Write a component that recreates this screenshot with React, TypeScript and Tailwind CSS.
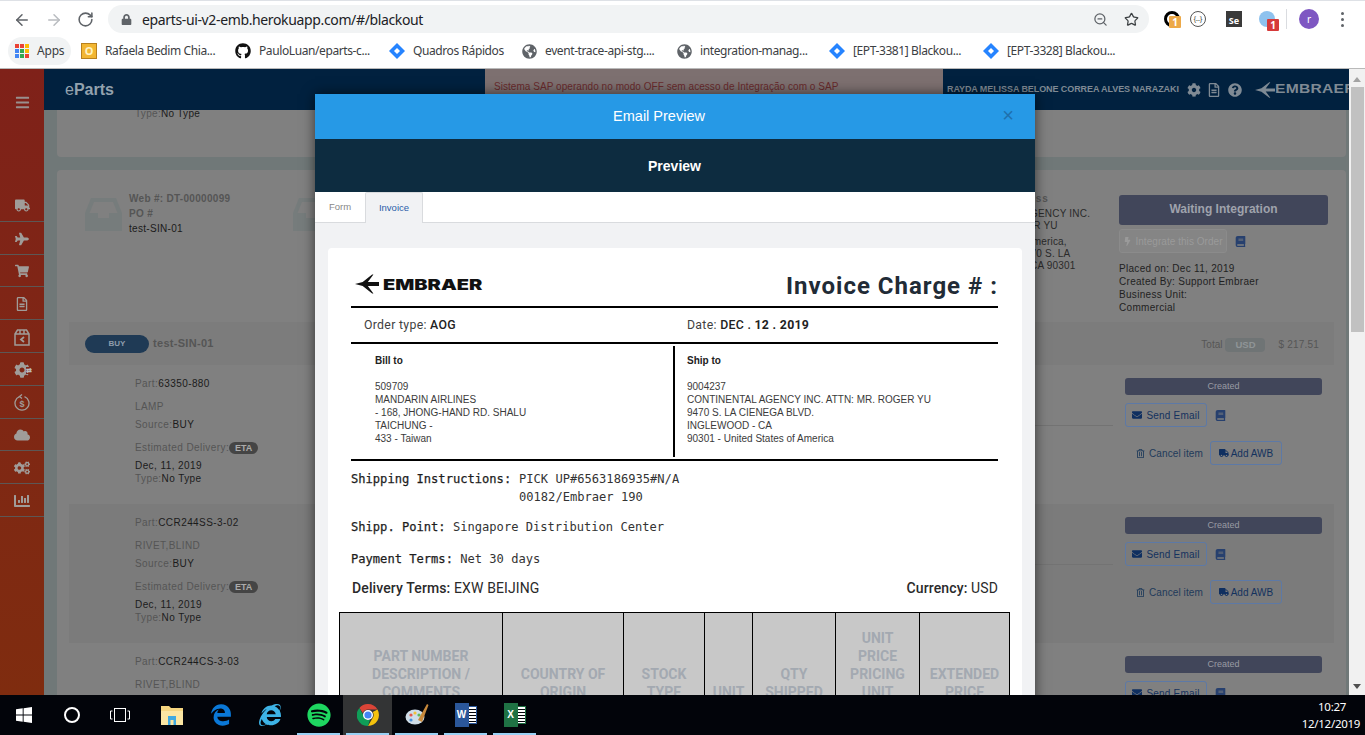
import React from "react";
import { ArrowLeft, ArrowRight, RotateCw, ZoomOut, Star } from "lucide-react";
import {
  FaLock, FaGithub, FaGlobeAmericas, FaBars, FaTruck, FaPlane, FaShoppingCart, FaRegFileAlt, FaCog, FaCloud,
  FaCogs, FaChartBar, FaBook, FaEnvelope, FaBolt, FaRegTrashAlt, FaQuestionCircle, FaSpotify, FaEdgeLegacy, FaInternetExplorer,
} from "react-icons/fa";

const Diamond = () => (
  <svg width="16" height="16" viewBox="0 0 16 16">
    <path d="M8 0 16 8 8 16 0 8Z" fill="#2684ff" />
    <path d="M8 5 11 8 8 11 5 8Z" fill="#fff" />
  </svg>
);

const Mark = ({ color, w = 28, h = 22 }: { color: string; w?: number; h?: number }) => (
  <svg width={w} height={h} viewBox="0 0 28 22" fill={color}>
    <path d="M0 11 9 8.6 20 0 21.5 0 15 8.8 28 8.8 28 13.2 15 13.2 21.5 22 20 22 9 13.4Z" />
  </svg>
);

const Tray = () => (
  <svg width="37" height="33" viewBox="0 0 37 33" className="shrink-0">
    <path fillRule="evenodd" d="M6 0H31L37 15V33H0V15ZM9 4 4.5 15H13V20H24V15H32.5L28 4Z" fill="#767c7c" />
  </svg>
);

const Bookmark = ({ icon, label, w }: { icon: React.ReactNode; label: string; w: string }) => (
  <div className={`flex items-center gap-2 shrink-0 ${w}`}>
    <span className="w-4 h-4 flex items-center justify-center shrink-0">{icon}</span>
    <span className="text-[12px] tracking-[-0.4px] text-[#3c4043] whitespace-nowrap">{label}</span>
  </div>
);

const Badge = ({ color, children }: { color: string; children: React.ReactNode }) => (
  <span className={`absolute -right-1 -bottom-1 w-3 h-3 rounded-[1px] text-[10px] leading-3 text-center font-bold text-white ${color}`}>{children}</span>
);

function BrowserChrome() {
  return (
    <div className="shrink-0 bg-white" style={{ fontFamily: '"Noto Sans", sans-serif' }}>
      <div className="h-[1px] bg-[#dee1e6]" />
      <div className="h-[37px] flex items-center">
        <div className="w-[108px] pl-[13px] flex items-center gap-[14px] text-[#5f6368]">
          <ArrowLeft size={18} strokeWidth={2} />
          <ArrowRight size={18} strokeWidth={2} className="text-[#b9bcc0]" />
          <RotateCw size={17} strokeWidth={2.2} />
        </div>
        <div className="w-[1041px] h-7 -mt-[1px] rounded-[14px] bg-[#f1f3f4] flex items-center pl-[13px] pr-[10px]">
          <FaLock size={11} className="text-[#5f6368]" />
          <span className="ml-[10px] text-[14px] tracking-[-0.36px] text-[#202124] flex-1 whitespace-nowrap">eparts-ui-v2-emb.herokuapp.com/#/blackout</span>
          <ZoomOut size={15} className="text-[#5f6368] mr-[16px]" />
          <Star size={15} className="text-[#3c4043]" />
        </div>
        <div className="flex items-center ml-[15px] -mt-[1px]">
          <span className="relative w-4 h-4 rounded-full border-[3px] border-black"><Badge color="bg-[#eda948]">1</Badge></span>
          <span className="ml-[10px] w-4 h-4 rounded-full border border-[#555] text-[7px] leading-[14px] text-center text-[#333]">{"{..}"}</span>
          <span className="ml-[20px] w-4 h-4 bg-[#3a3a3a] text-white text-[9px] leading-[16px] pt-[2px] text-center font-bold">Se</span>
          <span className="relative ml-[17px] w-4 h-4 rounded-full bg-[#8ec2ee]"><Badge color="bg-[#d63a3a]">1</Badge></span>
          <span className="ml-[11px] w-[1px] h-5 bg-[#dadce0]" />
          <span className="ml-[12px] w-5 h-5 rounded-full bg-[#7e57c2] text-white text-[10px] leading-5 text-center">r</span>
          <span className="ml-[22px] flex flex-col gap-[3px]">
            <i className="w-[3px] h-[3px] rounded-full bg-[#5f6368]" />
            <i className="w-[3px] h-[3px] rounded-full bg-[#5f6368]" />
            <i className="w-[3px] h-[3px] rounded-full bg-[#5f6368]" />
          </span>
        </div>
      </div>
      <div className="h-[31px] flex items-center border-b border-[#b9b9b9] pl-[8px]">
        <div className="w-[63px] h-[28px] rounded-[14px] bg-[#f1f3f4] flex items-center pl-[7px] gap-[8px] shrink-0 -mt-[4px]">
          <span className="grid grid-cols-3 gap-[1.5px] w-[14px]">
            {["#ea4335","#ea4335","#fbbc04","#4285f4","#34a853","#fbbc04","#4285f4","#34a853","#ea4335"].map((c, i) => (
              <i key={i} className="w-[3.5px] h-[3.5px]" style={{ background: c }} />
            ))}
          </span>
          <span className="text-[12px] tracking-[-0.2px] text-[#3c4043]">Apps</span>
        </div>
        <div className="flex items-center ml-[10px] -mt-[4px]">
          <Bookmark w="w-[154px]" label="Rafaela Bedim Chia..." icon={<span className="w-4 h-4 bg-[#f2b632] border border-[#b8801c] text-[11px] font-bold leading-[14px] text-center text-[#fff3c4]">O</span>} />
          <Bookmark w="w-[154px]" label="PauloLuan/eparts-c..." icon={<FaGithub size={16} className="text-[#111]" />} />
          <Bookmark w="w-[132px]" label="Quadros Rápidos" icon={<Diamond />} />
          <Bookmark w="w-[155px]" label="event-trace-api-stg...." icon={<FaGlobeAmericas size={15} className="text-[#5f6368]" />} />
          <Bookmark w="w-[153px]" label="integration-manag..." icon={<FaGlobeAmericas size={15} className="text-[#5f6368]" />} />
          <Bookmark w="w-[154px]" label="[EPT-3381] Blackou..." icon={<Diamond />} />
          <Bookmark w="w-[140px]" label="[EPT-3328] Blackou..." icon={<Diamond />} />
        </div>
      </div>
    </div>
  );
}

const SideRow = ({ children }: { children: React.ReactNode }) => (
  <div className="h-[32.8px] pt-[2px] border-b border-[#5c5755] flex items-center justify-center text-[#a09c99]">{children}</div>
);

function Sidebar() {
  return (
    <div className="w-[44px] shrink-0 bg-gradient-to-b from-[#7f2119] to-[#7f2c0f]">
      <div className="h-[120px] pt-[26px] flex justify-center text-[#99908e]"><FaBars size={15} /></div>
      <SideRow><FaTruck size={15} /></SideRow>
      <SideRow><FaPlane size={14} /></SideRow>
      <SideRow><FaShoppingCart size={14} /></SideRow>
      <SideRow><FaRegFileAlt size={14} /></SideRow>
      <SideRow>
        <svg width="16" height="17" viewBox="0 0 16 17" fill="none" stroke="currentColor" strokeWidth="1.5">
          <path d="M1 5 3.5 1h9L15 5v11H1ZM1 5h14M6 1v4M10 1v4" />
          <path d="M10 8 7 10.5 10 13" strokeWidth="1.8" />
        </svg>
      </SideRow>
      <SideRow><span className="relative"><FaCog size={16} /><span className="absolute -right-[2px] top-[5px] text-[7px] font-bold leading-[7px] bg-[#7f2515] text-[#bbb]">⇄</span></span></SideRow>
      <SideRow>
        <svg width="16" height="17" viewBox="0 0 16 17" fill="none" stroke="currentColor" strokeWidth="1.3">
          <path d="M10.5 2.6A7 7 0 1 1 5.5 2.6" /><path d="M8 .5 5.5 2.6 8 4.6" />
          <text x="8" y="12.5" fontSize="9" fontWeight="700" fill="currentColor" stroke="none" textAnchor="middle" fontFamily="Liberation Sans">$</text>
        </svg>
      </SideRow>
      <SideRow><FaCloud size={16} /></SideRow>
      <SideRow><FaCogs size={16} /></SideRow>
      <SideRow><FaChartBar size={16} /></SideRow>
    </div>
  );
}

function TopHeader() {
  return (
    <div className="relative h-[41px] shrink-0 bg-[#01213f] flex items-center pl-[21px] pr-0" style={{ fontFamily: '"Liberation Sans", sans-serif' }}>
      <span className="text-[16px] font-bold text-[#93a2ae]"><span className="font-normal">e</span>Parts</span>
      <div className="absolute left-[441px] top-0 w-[458px] h-[41px] rounded-b-[3px] bg-[#7d7070] pl-[9px] pt-[11px] text-[10px] leading-[13px] tracking-[0.05px] text-[#682a2c]">
        Sistema SAP operando no modo OFF sem acesso de Integração com o SAP
      </div>
      <div className="ml-auto flex items-center overflow-hidden w-[402px] shrink-0 text-[#7f8a94]">
        <span className="text-[9px] font-bold whitespace-nowrap tracking-[-0.08px] w-[239px] shrink-0">RAYDA MELISSA BELONE CORREA ALVES NARAZAKI</span>
        <FaCog size={14} className="shrink-0 ml-[1px]" />
        <FaRegFileAlt size={14} className="shrink-0 ml-[6px]" />
        <FaQuestionCircle size={14} className="shrink-0 ml-[7px]" />
        <span className="shrink-0 ml-[13px]"><Mark color="#7f8a94" w={20} h={18} /></span>
        <span className="text-[12.5px] font-bold tracking-[0.2px] whitespace-nowrap scale-x-[1.25] origin-left">EMBRAER</span>
      </div>
    </div>
  );
}

const Lbl = ({ l, v }: { l: string; v: string }) => (
  <div className="text-[#555]">{l}<span className="text-[#1b1b1b]">{v}</span></div>
);

function PartRow({ part, desc, dark, line }: { part: string; desc: string; dark?: boolean; line?: boolean }) {
  return (
    <div className={`h-[139px] flex shrink-0 pl-[66px] pr-[12px] pt-[13px] ${dark ? "bg-[#7b7b7b]" : ""}`}>
      <div className="w-[300px] shrink-0 text-[10px] leading-[12px] tracking-[0.42px]">
        <Lbl l="Part:" v={part} />
        <div className="mt-[11px] text-[#555]">{desc}</div>
        <div className="mt-[6px]"><Lbl l="Source:" v="BUY" /></div>
        <div className="mt-[11px] flex items-center text-[#555]">Estimated Delivery:
          <span className="w-[29px] h-[12px] rounded-[6px] bg-[#454545] text-[#ababab] text-[9px] font-bold text-center leading-[12px] tracking-normal">ETA</span>
        </div>
        <div className="mt-[6px] text-[#1b1b1b]">Dec, 11, 2019</div>
        <div className="mt-[1px]"><Lbl l="Type:" v="No Type" /></div>
      </div>
      <div className="flex-1">{line && <div className="mt-[47px] h-[1px] bg-[#737373]" />}</div>
      <div className="w-[197px] ml-[12px] shrink-0">
        <div className="h-[17px] rounded-[3px] bg-[#41465a] text-[#999ba3] text-[9px] text-center leading-[17px]">Created</div>
        <div className="flex items-center mt-[8px]">
          <div className="w-[82px] h-[24px] rounded-[3px] border border-[#5d79a6] flex items-center justify-center gap-[4px] text-[10px] tracking-[0.2px] text-[#14325e]"><FaEnvelope size={10} className="text-[#0f2f60]" />Send Email</div>
          <FaBook size={11} className="ml-[8px] text-[#27406e]" />
        </div>
        <div className="flex items-center mt-[14px] pl-[11px]">
          <FaRegTrashAlt size={9} className="text-[#1e3a5a]" />
          <span className="ml-[4px] text-[10px] tracking-[0.1px] text-[#1e3a5a] whitespace-nowrap">Cancel item</span>
          <div className="ml-[7px] w-[72px] h-[24px] rounded-[3px] border border-[#5d79a6] flex items-center justify-center gap-[2px] text-[10px] text-[#14325e] whitespace-nowrap"><FaTruck size={10} className="text-[#0f2f60]" />Add AWB</div>
        </div>
      </div>
    </div>
  );
}

function Background() {
  return (
    <div className="flex-1 min-w-0 flex flex-col overflow-hidden bg-[#707878]" style={{ fontFamily: '"Liberation Sans", sans-serif' }}>
      <TopHeader />
      <div className="flex-1 pl-[13px] pr-[3px] flex flex-col gap-[13px] overflow-hidden">
        <div className="h-[47px] shrink-0 bg-[#808080] rounded-b-[4px] pl-[78px] text-[10px] leading-[7px] tracking-[0.3px]">
          <Lbl l="Type:" v="No Type" />
        </div>
        <div className="flex-1 bg-[#808080] rounded-t-[4px] flex flex-col min-h-0">
          <div className="h-[152px] shrink-0 flex pl-[28px] pt-[25px]">
            <div className="w-[208px] shrink-0 flex">
              <span className="mt-[3px]"><Tray /></span>
              <div className="ml-[7px] text-[10px] leading-[15px] tracking-[0.3px] -mt-[4px]">
                <div className="font-bold text-[#555]">Web #: DT-00000099</div>
                <div className="font-bold text-[#555]">PO #</div>
                <div className="text-[#1b1b1b]">test-SIN-01</div>
              </div>
            </div>
            <div className="flex-1"><span className="block mt-[3px]"><Tray /></span></div>
            <div className="w-[170px] shrink-0 -mt-[4px] text-[10px] leading-[12px] tracking-[0.2px] text-[#2a2a2a]">
              <div className="font-bold text-[#555] tracking-[0.9px] leading-[15px]">Shipping Address</div>
              <div className="mt-[2px]">CONTINENTAL AGENCY INC.<br />ATTN: MR. ROGER YU</div>
              <div className="mt-[4px]">United States of America,<br />INGLEWOOD, 9470 S. LA<br />CIENEGA BLVD, CA 90301</div>
            </div>
            <div className="w-[209px] shrink-0 mr-[18px]">
              <div className="h-[30px] rounded-[3px] bg-[#41465a] text-[#9fa2ac] text-[12px] font-bold text-center leading-[28px]">Waiting Integration</div>
              <div className="flex items-center mt-[4px]">
                <div className="w-[108px] h-[24px] rounded-[3px] border border-[#8b8b8b] bg-[#858585] flex items-center justify-center gap-[3px] text-[10px] tracking-[0.05px] text-[#9a9a9a] whitespace-nowrap"><FaBolt size={9} />Integrate this Order</div>
                <FaBook size={11} className="ml-[8px] text-[#27406e]" />
              </div>
              <div className="mt-[9px] text-[10px] leading-[13px] tracking-[0.3px] text-[#1f1f1f]">
                Placed on: Dec 11, 2019<br />Created By: Support Embraer<br />Business Unit:<br />Commercial
              </div>
            </div>
          </div>
          <div className="mx-[12px] flex flex-col">
            <div className="h-[43px] shrink-0 bg-[#7c7c7c] flex items-center pl-[16px] pr-[15px]">
              <span className="w-[64px] h-[18px] rounded-[9px] bg-[#1f3a55] text-[#8e9cab] text-[8px] font-bold text-center leading-[18px]">BUY</span>
              <span className="ml-[4px] text-[11px] tracking-[0.3px] font-bold text-[#555]">test-SIN-01</span>
              <span className="ml-auto text-[10px] text-[#565656] pt-[2px]">Total</span>
              <span className="ml-[3px] w-[40px] h-[14px] rounded-[4px] bg-[#6f7475] text-[#8f9597] text-[9.5px] text-center leading-[14px] font-bold mt-[2px]">USD</span>
              <span className="ml-[13px] text-[10px] tracking-[0.2px] text-[#565656] pt-[2px]">$ 217.51</span>
            </div>
            <PartRow part="63350-880" desc="LAMP" line />
            <PartRow part="CCR244SS-3-02" desc="RIVET,BLIND" dark line />
            <PartRow part="CCR244CS-3-03" desc="RIVET,BLIND" />
          </div>
        </div>
      </div>
    </div>
  );
}

const MonoLabel = ({ children }: { children: React.ReactNode }) => (
  <span className="text-[#1c1c1c] [-webkit-text-stroke:0.25px_#222]">{children}</span>
);

function Modal() {
  return (
    <div className="absolute left-[315px] top-[25px] w-[720px] bg-[#f1f2f4] shadow-[0_0_12px_rgba(0,0,0,0.6)]" style={{ fontFamily: 'Roboto, sans-serif' }}>
      <div className="relative h-[45px] bg-[#2699e6] flex items-center justify-center text-white text-[14.5px] font-medium" style={{ fontFamily: '"Liberation Sans", sans-serif' }}>
        <span className="-ml-[32px]">Email Preview</span>
        <span className="absolute right-[21px] top-[10px] text-[#1f70ad] text-[20px] leading-[22px]">×</span>
      </div>
      <div className="h-[53px] pt-[1px] bg-[#0d2c40] flex items-center justify-center text-white text-[14px] font-bold" style={{ fontFamily: '"Liberation Sans", sans-serif' }}>
        <span className="-ml-[1px]">Preview</span>
      </div>
      <div className="h-[31px] bg-white border-b border-[#d9dbde] flex items-end text-[9.5px]" style={{ fontFamily: '"Liberation Sans", sans-serif' }}>
        <div className="w-[50px] h-[30px] leading-[30px] text-center text-[#888]">Form</div>
        <div className="w-[58px] h-[31px] -mb-[1px] leading-[30px] text-center text-[#2a5da8] bg-[#f1f2f4] border border-b-0 border-[#d9dbde] rounded-t-[2px]">Invoice</div>
      </div>
      <div className="pt-[25px] px-[13px]">
        <div className="bg-white rounded-t-[4px] px-[23px] pr-[24px]">
          <div className="h-[60px] flex items-center justify-between border-b-[2px] border-black">
            <div className="flex items-center pl-[4px] mt-[14px]">
              <Mark color="#111" w={24} h={24} />
              <span className="ml-[4px] text-[15px] leading-[15px] font-black text-[#111] scale-x-[1.33] origin-left whitespace-nowrap w-[102px]" style={{ fontFamily: 'Inter, sans-serif' }}>EMBRAER</span>
            </div>
            <div className="mt-[18px] text-[24px] font-bold tracking-[1px] text-[#212b36]">Invoice Charge # :</div>
          </div>
          <div className="h-[36px] flex items-center text-[12.3px] border-b-[2px] border-black text-[#3f3f3f] tracking-[0.3px]">
            <div className="w-[336px] pl-[13px]">Order type: <span className="font-medium text-[#222]">AOG</span></div>
            <div>Date: <span className="font-medium text-[#222]">DEC . <b>12 . 2019</b></span></div>
          </div>
          <div className="h-[117px] flex border-b-[2px] border-black text-[10px] leading-[13px] text-[#3b3b3b]" style={{ fontFamily: '"Liberation Sans", sans-serif' }}>
            <div className="w-[324px] pl-[24px] pt-[8px] border-r-[2px] border-black my-[2px]">
              <div className="font-bold text-[#222]">Bill to</div>
              <div className="mt-[13px]">509709<br />MANDARIN AIRLINES<br />- 168, JHONG-HAND RD. SHALU<br />TAICHUNG -<br />433 - Taiwan</div>
            </div>
            <div className="pl-[12px] pt-[10px]">
              <div className="font-bold text-[#222]">Ship to</div>
              <div className="mt-[13px]">9004237<br />CONTINENTAL AGENCY INC. ATTN: MR. ROGER YU<br />9470 S. LA CIENEGA BLVD.<br />INGLEWOOD - CA<br />90301 - United States of America</div>
            </div>
          </div>
          <div className="pt-[9px] text-[12.1px] text-[#333] leading-[18px]" style={{ fontFamily: '"DejaVu Sans Mono", monospace' }}>
            <div className="flex whitespace-pre"><span className="w-[168px] shrink-0"><MonoLabel>Shipping Instructions: </MonoLabel></span><span>PICK UP#6563186935#N/A{"\n"}00182/Embraer 190</span></div>
            <div className="mt-[12px]"><MonoLabel>Shipp. Point:</MonoLabel> Singapore Distribution Center</div>
            <div className="mt-[14px]"><MonoLabel>Payment Terms:</MonoLabel> Net 30 days</div>
          </div>
          <div className="mt-[11px] flex justify-between text-[14px] tracking-[0.12px] leading-[18px] text-[#2a2a2a]">
            <div className="pl-[1px]"><span className="font-medium">Delivery Terms:</span> EXW BEIJING</div>
            <div><span className="font-medium">Currency:</span> USD</div>
          </div>
          <table className="table-fixed border-collapse -mx-[12px] w-[670px] mt-[15px] text-[14px] leading-[18px] font-bold text-[#a3a9b1]" style={{ width: 670, maxWidth: 670 }}>
            <thead>
              <tr className="bg-[#c8c8c8] text-center align-bottom">
                <th className="w-[163px] border border-black px-[8px] pt-[16px] pb-[15px] align-bottom">PART NUMBER DESCRIPTION / COMMENTS</th>
                <th className="w-[121px] border border-black px-[8px] pb-[15px] align-bottom">COUNTRY OF ORIGIN</th>
                <th className="w-[81px] border border-black px-[8px] pb-[15px] align-bottom">STOCK TYPE</th>
                <th className="w-[48px] border border-black px-[4px] pb-[15px] align-bottom">UNIT</th>
                <th className="w-[83px] border border-black px-[8px] pb-[15px] align-bottom">QTY SHIPPED</th>
                <th className="w-[84px] border border-black px-[8px] pb-[15px] pt-[16px] align-bottom">UNIT PRICE PRICING UNIT</th>
                <th className="w-[90px] border border-black px-[4px] pb-[15px] align-bottom">EXTENDED PRICE</th>
              </tr>
            </thead>
          </table>
          <div className="h-[40px]" />
        </div>
      </div>
    </div>
  );
}

function Scrollbar() {
  return (
    <div className="w-[16px] shrink-0 bg-[#f1f1f1] flex flex-col items-center relative">
      <div className="mt-[8px] w-0 h-0 border-x-[4px] border-x-transparent border-b-[5px] border-b-[#a3a3a3]" />
      <div className="mt-[5px] w-[13px] h-[245px] bg-[#c1c1c1]" />
      <div className="mt-auto mb-[6px] w-0 h-0 border-x-[4px] border-x-transparent border-t-[5px] border-t-[#505050]" />
    </div>
  );
}

const Tile = ({ children, on, active }: { children: React.ReactNode; on?: boolean; active?: boolean }) => (
  <div className={`relative w-[49px] h-[40px] shrink-0 flex items-center justify-center ${active ? "bg-[#333435]" : ""}`}>
    {children}
    {on && <span className="absolute bottom-0 left-[3px] right-[3px] h-[2px] bg-[#99d1f5]" />}
  </div>
);

const Chrome = () => (
  <svg width="22" height="22" viewBox="0 0 22 22">
    <path d="M11 0a11 11 0 0 1 9.5 5.5H11a5.5 5.5 0 0 0-5.2 3.6L2.4 3.9A11 11 0 0 1 11 0Z" fill="#db4437" />
    <path d="M20.5 5.5A11 11 0 0 1 11 22l4.8-8.2A5.5 5.5 0 0 0 15.8 8Z" fill="#f4c20d" />
    <path d="M11 22A11 11 0 0 1 2.4 3.9l4.6 8.5a5 5 0 0 0 6 3.1Z" fill="#0f9d58" />
    <circle cx="11" cy="11" r="4.3" fill="#4285f4" stroke="#fff" strokeWidth="1.4" />
  </svg>
);

const Office = ({ bg, letter, lines }: { bg: string; letter: string; lines: string }) => (
  <div className="relative w-[22px] h-[24px]">
    <div className={`absolute right-0 top-[3px] w-[12px] h-[18px] border ${lines}`} style={{ background: "repeating-linear-gradient(180deg,#fff 0 2px,transparent 2px 3px)" }} />
    <div className={`absolute left-0 top-0 w-[14px] h-[24px] ${bg} text-white text-[10px] font-bold text-center leading-[24px]`} style={{ fontFamily: '"Liberation Sans", sans-serif' }}>{letter}</div>
  </div>
);

function Taskbar() {
  return (
    <div className="h-[40px] shrink-0 bg-[#02040a] flex items-center relative" style={{ fontFamily: '"Noto Sans", sans-serif' }}>
      <div className="w-[48px] flex justify-center">
        <svg width="16" height="16" viewBox="0 0 16 16" fill="#fff"><path d="M0 2.3 6.7 1.3V7.5H0ZM7.6 1.2 16 0V7.5H7.6ZM0 8.4H6.7V14.7L0 13.7ZM7.6 8.4H16V16L7.6 14.8Z" /></svg>
      </div>
      <div className="w-[48px] flex justify-center"><span className="w-[16px] h-[16px] rounded-full border-2 border-white" /></div>
      <div className="w-[51px] flex justify-center pr-[3px]">
        <svg width="20" height="14" viewBox="0 0 20 14" fill="none" stroke="#fff" strokeWidth="1"><rect x="4.5" y=".5" width="11" height="13" /><path d="M2.5 3H.5v8h2M17.5 3h2v8h-2" /></svg>
      </div>
      <Tile>
        <svg width="22" height="20" viewBox="0 0 22 20"><path d="M0 1h8l2 2h12v17H0Z" fill="#f6d680" /><rect x="0" y="6" width="22" height="14" fill="#fbe6a3" /><rect x="7" y="11" width="8" height="9" fill="#3fa9e0" /><rect x="9.5" y="15" width="3" height="5" fill="#fbe6a3" /></svg>
      </Tile>
      <Tile><FaEdgeLegacy size={22} className="text-[#0a78d7]" /></Tile>
      <Tile>
        <FaInternetExplorer size={22} className="text-[#3db3e6]" />
      </Tile>
      <Tile on><FaSpotify size={24} className="text-[#1ed760]" /></Tile>
      <Tile on active><Chrome /></Tile>
      <Tile on>
        <svg width="24" height="24" viewBox="0 0 24 24"><ellipse cx="10" cy="14" rx="9.5" ry="7.5" fill="#cfdde8" /><circle cx="6" cy="12" r="1.6" fill="#e3584a" /><circle cx="10" cy="10" r="1.6" fill="#f2c037" /><circle cx="14" cy="12" r="1.6" fill="#5cb85c" /><circle cx="6" cy="17" r="1.6" fill="#4a90d9" /><path d="M13 17 22 1l1.5 1L17 19Z" fill="#c98a3c" /></svg>
      </Tile>
      <Tile on><Office bg="bg-[#2b579a]" letter="W" lines="border-[#2b579a]" /></Tile>
      <Tile on><Office bg="bg-[#1f7244]" letter="X" lines="border-[#1f7244]" /></Tile>
      <div className="ml-auto pr-[5px] text-right text-white text-[11.5px] tracking-[-0.3px] leading-[17px]">
        <div className="pr-[14px]">10:27</div>
        <div>12/12/2019</div>
      </div>
    </div>
  );
}

export default function App() {
  return (
    <div className="w-[1365px] h-[735px] flex flex-col overflow-hidden bg-white">
      <BrowserChrome />
      <div className="relative flex-1 min-h-0 flex overflow-hidden">
        <Sidebar />
        <Background />
        <Scrollbar />
        <Modal />
      </div>
      <Taskbar />
    </div>
  );
}
